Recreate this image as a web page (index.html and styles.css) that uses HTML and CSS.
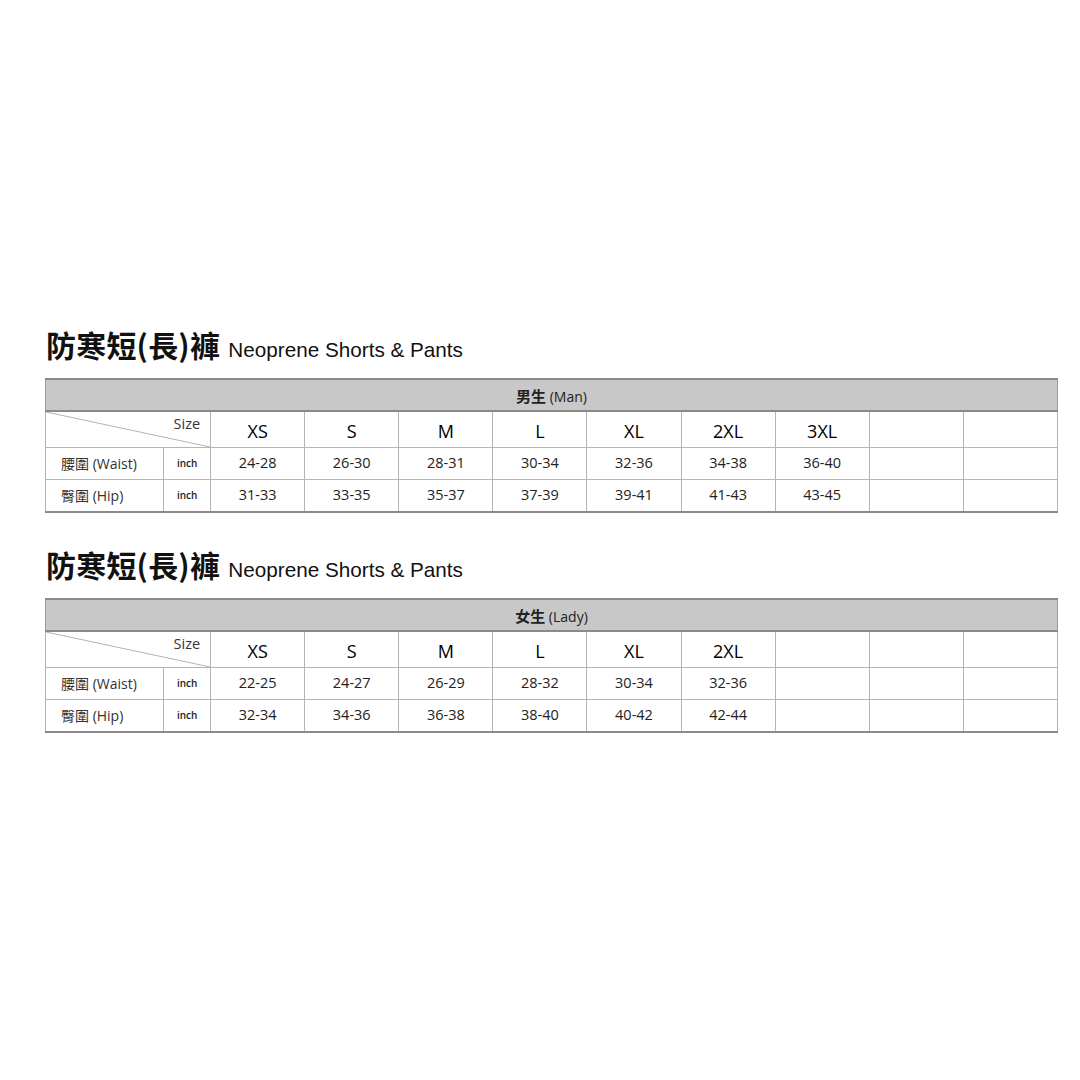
FILE: index.html
```html
<!DOCTYPE html>
<html lang="zh-Hant">
<head>
<meta charset="utf-8">
<link rel="stylesheet" href="styles.css">
</head>
<body>
<div class="sheet">
  <section class="chart">
    <h2 class="title"><span class="zh">防寒短(長)褲</span> <span class="en">Neoprene Shorts &amp; Pants</span></h2>
    <table class="size-table">
      <colgroup><col class="c-label"><col class="c-unit"><col class="c-size"><col class="c-size"><col class="c-size"><col class="c-size"><col class="c-size"><col class="c-size"><col class="c-size"><col class="c-size"><col class="c-size"></colgroup>
      <tr class="head"><td colspan="11"><span class="zh-b">男生</span> (Man)</td></tr>
      <tr class="sizes"><td colspan="2" class="diag"><svg class="slash" viewBox="0 0 100 100" preserveAspectRatio="none"><line x1="0" y1="0" x2="100" y2="100"/></svg><span class="size-lbl">Size</span></td><td>XS</td><td>S</td><td>M</td><td>L</td><td>XL</td><td>2XL</td><td>3XL</td><td></td><td></td></tr>
      <tr class="row"><td class="lbl">腰圍 (Waist)</td><td class="unit">inch</td><td>24-28</td><td>26-30</td><td>28-31</td><td>30-34</td><td>32-36</td><td>34-38</td><td>36-40</td><td></td><td></td></tr>
      <tr class="row"><td class="lbl">臀圍 (Hip)</td><td class="unit">inch</td><td>31-33</td><td>33-35</td><td>35-37</td><td>37-39</td><td>39-41</td><td>41-43</td><td>43-45</td><td></td><td></td></tr>
    </table>
  </section>
  <section class="chart second">
    <h2 class="title"><span class="zh">防寒短(長)褲</span> <span class="en">Neoprene Shorts &amp; Pants</span></h2>
    <table class="size-table">
      <colgroup><col class="c-label"><col class="c-unit"><col class="c-size"><col class="c-size"><col class="c-size"><col class="c-size"><col class="c-size"><col class="c-size"><col class="c-size"><col class="c-size"><col class="c-size"></colgroup>
      <tr class="head"><td colspan="11"><span class="zh-b">女生</span> (Lady)</td></tr>
      <tr class="sizes"><td colspan="2" class="diag"><svg class="slash" viewBox="0 0 100 100" preserveAspectRatio="none"><line x1="0" y1="0" x2="100" y2="100"/></svg><span class="size-lbl">Size</span></td><td>XS</td><td>S</td><td>M</td><td>L</td><td>XL</td><td>2XL</td><td></td><td></td><td></td></tr>
      <tr class="row"><td class="lbl">腰圍 (Waist)</td><td class="unit">inch</td><td>22-25</td><td>24-27</td><td>26-29</td><td>28-32</td><td>30-34</td><td>32-36</td><td></td><td></td><td></td></tr>
      <tr class="row"><td class="lbl">臀圍 (Hip)</td><td class="unit">inch</td><td>32-34</td><td>34-36</td><td>36-38</td><td>38-40</td><td>40-42</td><td>42-44</td><td></td><td></td><td></td></tr>
    </table>
  </section>
</div>
</body>
</html>
```
FILE: styles.css
```css
html, body {
  margin: 0;
  padding: 0;
  background: #ffffff;
}
body {
  width: 1080px;
  height: 1080px;
  overflow: hidden;
  font-family: "Open Sans", "Noto Sans CJK TC", sans-serif;
  color: #222;
}
.sheet {
  padding: 326px 0 0 45px;
}
.chart.second {
  margin-top: 33px;
}
.title {
  margin: 0 0 16px 1px;
  height: 36px;
  line-height: 36px;
  font-weight: normal;
  white-space: nowrap;
  color: #111;
}
.title .zh {
  font-family: "Noto Sans CJK TC", sans-serif;
  font-weight: 700;
  font-size: 30px;
  letter-spacing: 0.2px;
}
.title .en {
  font-family: "Liberation Sans", Arial, sans-serif;
  font-size: 20.7px;
  margin-left: 2px;
}
.size-table {
  border-collapse: collapse;
  table-layout: fixed;
  width: 1013px;
  border-bottom: 2px solid #8a8a8a;
}
.c-label { width: 118px; }
.c-unit { width: 47px; }
.c-size { width: 94px; }
.size-table td {
  border: 1px solid #b4b4b4;
  text-align: center;
  padding: 0;
  font-size: 14.5px;
  color: #222;
  white-space: nowrap;
}
.head td {
  background: #c8c8c8;
  height: 30px;
  border: 1px solid #9a9a9a;
  border-top: 2px solid #8a8a8a;
  border-bottom: 2px solid #8a8a8a;
  font-size: 14px;
}
.zh-b {
  font-family: "Noto Sans CJK TC", sans-serif;
  font-weight: 700;
  font-size: 15px;
}
.sizes td {
  height: 33px;
  font-size: 18px;
  font-weight: 500;
  color: #000;
  padding-top: 2px;
}
.row td {
  height: 29px;
  padding-bottom: 2px;
}
.diag {
  position: relative;
}
.slash {
  position: absolute;
  left: 0;
  top: 0;
  width: 100%;
  height: 100%;
}
.slash line {
  stroke: #b4b4b4;
  stroke-width: 1;
  vector-effect: non-scaling-stroke;
}
.size-lbl {
  position: absolute;
  right: 10px;
  top: 2px;
  font-size: 14.5px;
  font-weight: normal;
  color: #333;
}
.lbl {
  text-align: left !important;
  padding-left: 15px !important;
  font-size: 14px !important;
  color: #333 !important;
}
.unit {
  font-size: 10px !important;
  font-weight: 600;
}
```
